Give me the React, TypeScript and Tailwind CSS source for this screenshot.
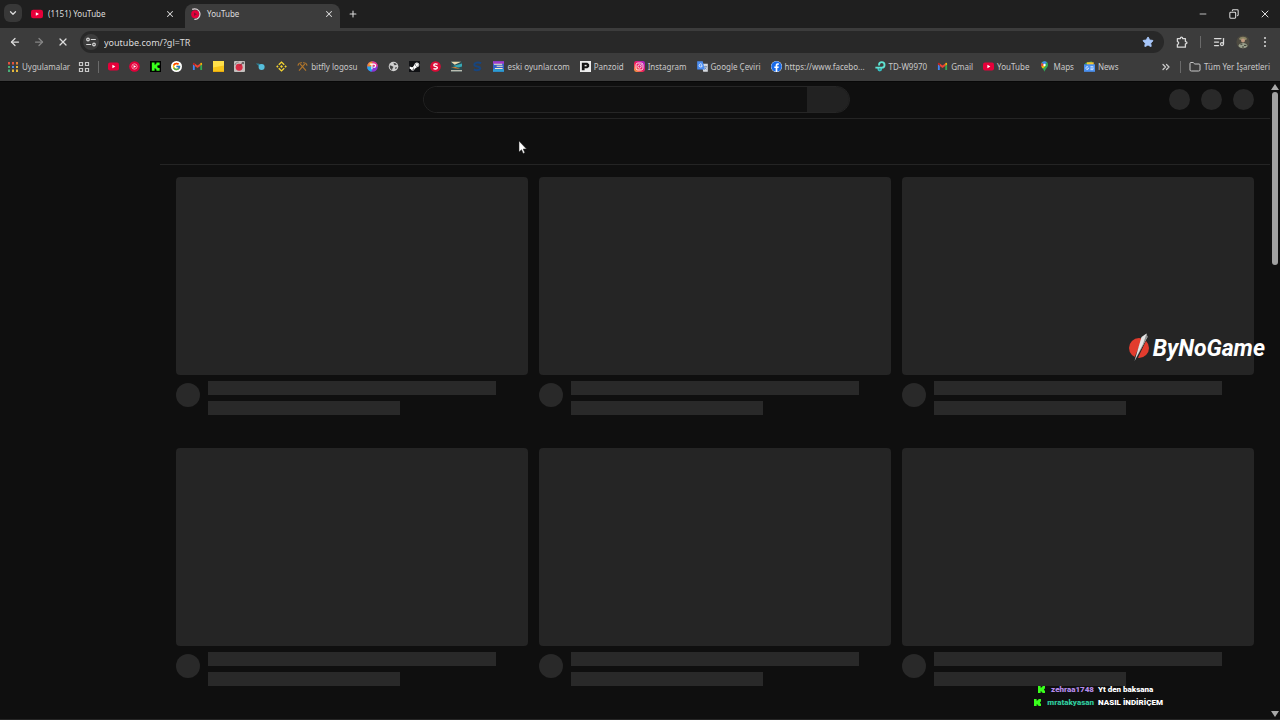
import type { ReactNode } from "react";
import { ArrowLeft, ArrowRight, ChevronDown, ChevronsRight, Copy, Folder, ListMusic, Minus, Plus, Star, X } from "lucide-react";
import { FcGoogle } from "react-icons/fc";
import { FaFacebook, FaSteamSymbol } from "react-icons/fa";

function YouTubeIcon() {
    return (
        <svg viewBox="0 0 12 12" className="size-3">
            <rect x="0" y="1.7" width="12" height="8.6" rx="2.2" fill="#e6003a" />
            <path d="M4.8 4.2v3.6L8 6z" fill="#fff" />
        </svg>
    );
}

function MusicIcon() {
    return (
        <svg viewBox="0 0 12 12" className="size-3">
            <circle cx="6" cy="6" r="5.8" fill="#e2003a" />
            <circle cx="6" cy="6" r="2.9" fill="none" stroke="#ffb9c8" strokeWidth="0.8" />
            <path d="M5 4.3v3.4L7.8 6z" fill="#fff" />
        </svg>
    );
}

function KickIcon() {
    return (
        <svg viewBox="0 0 12 12" className="size-3">
            <path d="M0 0h12v12H0z" fill="#000" />
            <path d="M2 1.500h3v2.500h1V3h1V1.500h3.500v3H9V5H8v2h1v.5h1.500v3H7V9H6V8H5v2.500H2z" fill="#39ff1c" />
        </svg>
    );
}

function GmailIcon() {
    return (
        <svg viewBox="0 0 12 12" className="size-3">
            <path d="M1 3.4v6.4h2V5.2z" fill="#4285f4" />
            <path d="M11 3.4v6.4H9V5.2z" fill="#34a853" />
            <path d="M9 5.2 11 3.8V3c0-1-1-1.2-1.6-.8L9 2.5z" fill="#fbbc04" />
            <path d="M3 2.6v2.8l3 2.3 3-2.3V2.6L6 4.9z" fill="#ea4335" />
            <path d="M3 5.2 1 3.8V3c0-1 1-1.2 1.6-.8l.4.3z" fill="#c5221f" />
        </svg>
    );
}

function YellowIcon() {
    return (
        <svg viewBox="0 0 12 12" className="size-3">
            <path d="M0 0h12v12H0z" fill="#f7c51b" />
            <path d="M0 0h12v5L0 7z" fill="#ffe04a" />
            <path d="M0 11h12v1H0z" fill="#e9a90c" />
        </svg>
    );
}

function RecordIcon() {
    return (
        <svg viewBox="0 0 12 12" className="size-3">
            <rect width="12" height="12" rx="1" fill="#c4c0be" />
            <circle cx="5.6" cy="6.8" r="3.8" fill="#d92b44" />
            <path d="M6.5 5 9.5 2" stroke="#7c2430" strokeWidth="1" />
            <circle cx="9.8" cy="2.2" r="1.4" fill="#6a6464" />
            <path d="M1 4.5C1.4 2.5 3 1.2 5 1.2" stroke="#77706e" strokeWidth="0.9" fill="none" />
        </svg>
    );
}

function CometIcon() {
    return (
        <svg viewBox="0 0 12 12" className="size-3">
            <path d="M1 2.6h3l3 1.4-2.5 2-2-1.8z" fill="#2d7f95" />
            <circle cx="7.2" cy="6.6" r="3.3" fill="#56bfdc" />
        </svg>
    );
}

function BinanceIcon() {
    return (
        <svg viewBox="0 0 12 12" className="size-3" fill="none" stroke="#f3d331" strokeWidth="1.5">
            <path d="M3 4.2 6 1.2l3 3M3 7.8l3 3 3-3" />
            <path d="M6 4.4 7.6 6 6 7.6 4.4 6zM1.5 4.7 2.8 6 1.5 7.3.2 6zM10.5 4.7 11.8 6l-1.3 1.3L9.2 6z" fill="#f3d331" strokeWidth="0" />
        </svg>
    );
}

function PickaxeIcon() {
    return (
        <svg viewBox="0 0 12 12" className="size-3" fill="none" stroke="#b3762a" strokeWidth="1.2">
            <path d="M2.2 10.6 8.6 3.2M9.8 10.6 3.4 3.2" />
            <path d="M6.6 2c1.6-.4 3.8.8 4.4 3M5.4 2C3.8 1.6 1.6 2.8 1 5" />
        </svg>
    );
}

function PaletteIcon() {
    return (
        <svg viewBox="0 0 12 12" className="size-3">
            <circle cx="6" cy="6" r="5.8" fill="#8a35d8" />
            <path d="M6 .2A5.8 5.8 0 0 1 11.8 6H6z" fill="#e8368c" />
            <path d="M6 .2A5.8 5.8 0 0 0 .2 6L6 7z" fill="#f08a2c" />
            <path d="M.2 6A5.8 5.8 0 0 0 5 11.7L6 6z" fill="#25a7ea" />
            <path d="M3 3.4h4.6a1.7 1.7 0 0 1 0 3.6H7M5.4 3.4v5.6" stroke="#fff" strokeWidth="1.2" fill="none" />
        </svg>
    );
}

function GlobeIcon() {
    return (
        <svg viewBox="0 0 12 12" className="size-3">
            <circle cx="6" cy="6" r="5.2" fill="#d0d0d0" />
            <path d="M2 4.6 4.4 5.4 6 6.6 5 8 4.4 9.8C3 9.2 1.9 8 1.9 6zM6 2l2.6.6L9.6 4 7.4 4.6 6.4 3.6zM8.4 6.6l1.4.2-1 2-1.2-.6z" fill="#444" />
        </svg>
    );
}

function SteamIcon() {
    return (
        <span className="flex size-[11px] items-center justify-center bg-[#101114]">
            <FaSteamSymbol className="size-[11px] text-white" />
        </span>
    );
}

function RedSIcon() {
    return (
        <svg viewBox="0 0 12 12" className="size-3">
            <circle cx="6" cy="6" r="5.8" fill="#dc0b37" />
            <path d="M8.2 3.7C7 2.8 4.2 2.8 4.2 4.5c0 1.8 3.8 1.1 3.8 2.9 0 1.7-3 1.7-4.2.7" stroke="#fff" strokeWidth="1.5" fill="none" />
        </svg>
    );
}

function BirdIcon() {
    return (
        <svg viewBox="0 0 12 12" className="size-3">
            <path d="M0 .5h12v11H0z" fill="#2b4a50" />
            <path d="M0 .8h11L4 4z" fill="#e9d9b0" />
            <path d="M2 5.4 12 2.8V6L8 7z" fill="#38a8b4" />
            <path d="M0 7.4 5 6.6l5 2z" fill="#e08232" />
            <path d="M0 10h12v1.3H0z" fill="#d8d4c4" />
        </svg>
    );
}

function BlueSIcon() {
    return (
        <svg viewBox="0 0 12 12" className="size-3">
            <path d="M10 2.4C7 1 2.6 1.6 2.6 4c0 2.6 6.4 1.4 6.4 4 0 2.2-4.4 2.6-7 1.2" stroke="#17457f" strokeWidth="2.2" fill="none" />
        </svg>
    );
}

function EskiIcon() {
    return (
        <svg viewBox="0 0 12 12" className="size-3">
            <path d="M0 .3h12v11.4H0z" fill="#3560c8" />
            <path d="M0 .3h12V3H0z" fill="#a637c9" />
            <path d="M0 9h12v2.7H0z" fill="#2c9fd2" />
            <path d="M1 3.6h9M4 5.8h6.5M2 8.2h8.5" stroke="#f5e8c4" strokeWidth="1.1" />
        </svg>
    );
}

function PanzoidIcon() {
    return (
        <svg viewBox="0 0 12 12" className="size-3">
            <path d="M0 0h12v12H0z" fill="#ededed" />
            <path d="M2 2h6l2 1.6v2.6L8 8H5v2H2z" fill="#161616" />
            <path d="M5 4.2h2.2v1.6H5z" fill="#ededed" />
        </svg>
    );
}

function InstagramIcon() {
    return (
        <svg viewBox="0 0 12 12" className="size-3">
            <defs>
                <linearGradient id="insta" x1="0" y1="1" x2="1" y2="0">
                    <stop offset="0" stopColor="#fdb43c" />
                    <stop offset="0.45" stopColor="#f01c5c" />
                    <stop offset="1" stopColor="#a51fd6" />
                </linearGradient>
            </defs>
            <rect width="12" height="12" rx="2.6" fill="url(#insta)" />
            <rect x="2.2" y="2.2" width="7.6" height="7.6" rx="2" fill="none" stroke="#fff" strokeWidth="0.9" />
            <circle cx="6" cy="6" r="1.8" fill="none" stroke="#fff" strokeWidth="0.9" />
            <circle cx="8.2" cy="3.8" r="0.5" fill="#fff" />
        </svg>
    );
}

function TranslateIcon() {
    return (
        <svg viewBox="0 0 12 12" className="size-3">
            <path d="M5 3h6.8v8.8h-5z" fill="#d6dae0" />
            <path d="M7.4 6H11M9.2 5.2V6M10.4 6c-.4 1.6-1.4 2.6-2.4 3.2M8.2 6.8c.4 1 1.2 1.8 2.4 2.4" stroke="#56749e" strokeWidth="0.6" fill="none" />
            <path d="M.2.4h6l2.4 9H.2z" fill="#4a8cf0" />
            <path d="M5.4 3.9A1.7 1.7 0 1 0 5.7 5.2H4.2" stroke="#fff" strokeWidth="0.8" fill="none" />
        </svg>
    );
}

function TpLinkIcon() {
    return (
        <svg viewBox="0 0 12 12" className="size-3" fill="none" strokeWidth="2">
            <path d="M3.6 6.6v2.2a1.6 1.6 0 0 0 3.2 0V7.4" stroke="#35c1c4" />
            <path d="M4.4 5V4.3a3 3 0 1 1 3 3H.4" stroke="#5fe3d3" />
        </svg>
    );
}

function MapsIcon() {
    return (
        <svg viewBox="0 0 12 12" className="size-3">
            <path d="M6 .4a3.9 3.9 0 0 0-3.9 4C2.1 7 5 8.2 6 11.8 7 8.2 9.9 7 9.9 4.4A3.9 3.9 0 0 0 6 .4z" fill="#34a853" />
            <path d="M6 .4a3.9 3.9 0 0 0-2.9 1.5L6 4.4l2.5-3.1C7.7.7 6.8.4 6 .4z" fill="#4285f4" />
            <path d="M3.1 1.9a4 4 0 0 0-.5 4.4L6 4.4z" fill="#ea4335" />
            <path d="M2.6 6.3c.5.8 1.2 1.3 1.7 2L7 5.4 6 4.4z" fill="#fbbc04" />
            <circle cx="6" cy="4.3" r="1.3" fill="#fff" />
        </svg>
    );
}

function NewsIcon() {
    return (
        <svg viewBox="0 0 12 12" className="size-3">
            <path d="M1 2.4 8.4.4l.6 3H1z" fill="#34a853" />
            <path d="M3 1.4h7.6v3H3z" fill="#f4c430" />
            <path d="M0 3.6h12v8.2H0z" fill="#4a90f0" />
            <path d="M4.6 6.6A1.5 1.5 0 1 0 5 7.9H3.8M7 6.2h3.2M7 7.8h3.8M7 9.4h3.2" stroke="#fff" strokeWidth="0.8" fill="none" />
        </svg>
    );
}

function AppsIcon() {
    return (
        <svg viewBox="0 0 12 12" className="size-3">
            <path d="M1 1h2v2.500H1zM5 1h2v2.500H5z" fill="#e5533f" />
            <path d="M9 1h2v2.500H9z" fill="#e0803a" />
            <path d="M1 5h2v2H1z" fill="#48b078" />
            <path d="M5 5h2v2H5z" fill="#4f8de8" />
            <path d="M9 5h2v2H9z" fill="#e6b93c" />
            <path d="M1 8.500h2V11H1z" fill="#48b078" />
            <path d="M5 8.500h2V11H5zM9 8.500h2V11H9z" fill="#e6b93c" />
        </svg>
    );
}

function TabGroupsIcon() {
    return (
        <svg viewBox="0 0 12 12" className="size-3" fill="none" stroke="#c8c8c8" strokeWidth="1.2">
            <path d="M1.500 1.500h3v3h-3zM7.500 1.500h3v3h-3zM1.500 7.500h3v3h-3zM7.500 7.500h3v3h-3z" />
        </svg>
    );
}

function LoadingIcon() {
    return (
        <svg viewBox="0 0 12 12" className="size-3">
            <circle cx="5.2" cy="6.2" r="4" fill="#e2003a" />
            <path d="M4 4.4v3.6L7 6.200z" fill="#7d1230" />
            <path d="M2.2 1.4A5.300 5.300 0 1 1 4.4 11.4" fill="none" stroke="#e4d8dc" strokeWidth="1.2" />
        </svg>
    );
}

function SiteInfoIcon() {
    return (
        <svg viewBox="0 0 12 12" className="size-3" fill="none" stroke="#d8d8d8" strokeWidth="1.2">
            <circle cx="3" cy="3.5" r="1.3" />
            <path d="M5.800 3.500h5M1.200 8.500h5" />
            <circle cx="9" cy="8.500" r="1.3" />
        </svg>
    );
}

function ExtensionIcon() {
    return (
        <svg viewBox="0 0 12 12" className="size-3" fill="none" stroke="#d8d8d8" strokeWidth="1.3" strokeLinejoin="round">
            <path d="M1.4 2.6h3C4.200.6 6.800.6 6.600 2.600h2.800v3c2-.2 2 2.400 0 2.200v3.400h-8V8.400c1.600 0 1.800-2.800 0-2.800z" />
        </svg>
    );
}

function ProfileIcon() {
    return (
        <svg viewBox="0 0 14 14" className="size-3.5">
            <circle cx="7" cy="7" r="6.6" fill="#4d4a40" />
            <path d="M3 4c1-3 7-3 8 0l-1 1H4z" fill="#8b8564" />
            <circle cx="7" cy="5.6" r="2" fill="#c09a80" />
            <path d="M2.4 11c.6-4 8.6-4 9.2 0-2 3-7.2 3-9.2 0z" fill="#9aa08c" />
            <path d="M4.4 9.2h2M8 10.4h2.4M6 12h2" stroke="#3a3a30" strokeWidth="1" />
        </svg>
    );
}

type Bookmark = { name: string; icon: ReactNode; label?: string };

const bookmarks: Bookmark[] = [
    { name: "YouTube", icon: <YouTubeIcon /> },
    { name: "YouTube Music", icon: <MusicIcon /> },
    { name: "Kick", icon: <KickIcon /> },
    { name: "Google", icon: <FcGoogle className="size-3 rounded-full bg-white p-px" /> },
    { name: "Gmail", icon: <GmailIcon /> },
    { name: "Notlar", icon: <YellowIcon /> },
    { name: "Kayıt", icon: <RecordIcon /> },
    { name: "Comet", icon: <CometIcon /> },
    { name: "Binance", icon: <BinanceIcon /> },
    { name: "bitfly", icon: <PickaxeIcon />, label: "bitfly logosu" },
    { name: "Palet", icon: <PaletteIcon /> },
    { name: "Web", icon: <GlobeIcon /> },
    { name: "Steam", icon: <SteamIcon /> },
    { name: "S", icon: <RedSIcon /> },
    { name: "Oyun", icon: <BirdIcon /> },
    { name: "S mavi", icon: <BlueSIcon /> },
    { name: "eski oyunlar", icon: <EskiIcon />, label: "eski oyunlar.com" },
    { name: "Panzoid", icon: <PanzoidIcon />, label: "Panzoid" },
    { name: "Instagram", icon: <InstagramIcon />, label: "Instagram" },
    { name: "Çeviri", icon: <TranslateIcon />, label: "Google Çeviri" },
    { name: "Facebook", icon: <FaFacebook className="size-3 rounded-full bg-white text-[#1769e8]" />, label: "https://www.facebo..." },
    { name: "TP-Link", icon: <TpLinkIcon />, label: "TD-W9970" },
    { name: "Gmail", icon: <GmailIcon />, label: "Gmail" },
    { name: "YouTube", icon: <YouTubeIcon />, label: "YouTube" },
    { name: "Maps", icon: <MapsIcon />, label: "Maps" },
    { name: "News", icon: <NewsIcon />, label: "News" },
];

function TabStrip() {
    return (
        <div className="flex h-7 items-end bg-[#1f1f1f] text-[8px] text-[#dcdcdc]">
            <button aria-label="Sekmelerde ara" className="mb-1.5 ml-1 flex size-[18px] items-center justify-center rounded-md bg-[#383838]">
                <ChevronDown className="size-2.5" strokeWidth={3} />
            </button>
            <div className="ml-[5px] flex h-6 w-[158px] items-center pr-2.5 pb-1 pl-1">
                <YouTubeIcon />
                <span className="ml-[5px] flex-1">(1151) YouTube</span>
                <button aria-label="Sekmeyi kapat"><X className="size-2.5" strokeWidth={2.5} /></button>
            </div>
            <div className="flex h-6 w-[155px] items-center rounded-t-lg bg-[#3c3c3c] pr-1.5 pb-1 pl-[5px]">
                <LoadingIcon />
                <span className="ml-[5px] flex-1">YouTube</span>
                <button aria-label="Sekmeyi kapat"><X className="size-2.5" strokeWidth={2.5} /></button>
            </div>
            <button aria-label="Yeni sekme" className="flex h-6 w-[26px] items-center justify-center pb-1">
                <Plus className="size-2.5" strokeWidth={2.5} />
            </button>
            <div className="ml-auto flex h-6 items-center pb-1">
                <button aria-label="Simge durumuna küçült" className="flex w-[31px] justify-center"><Minus className="size-2.5" /></button>
                <button aria-label="Geri yükle" className="flex w-[31px] justify-center"><Copy className="size-2.5 -scale-x-100" strokeWidth={2.5} /></button>
                <button aria-label="Kapat" className="flex w-[31px] justify-center"><X className="size-3" /></button>
            </div>
        </div>
    );
}

function Toolbar() {
    return (
        <div className="flex h-7 items-center bg-[#3c3c3c] pr-[5px] pl-[3px] text-[#dcdcdc]">
            <button aria-label="Geri" className="flex w-6 justify-center"><ArrowLeft className="size-3" strokeWidth={2.5} /></button>
            <button aria-label="İleri" className="flex w-6 justify-center text-[#858585]"><ArrowRight className="size-3" strokeWidth={2.5} /></button>
            <button aria-label="Durdur" className="flex w-6 justify-center"><X className="size-3" strokeWidth={2.5} /></button>
            <div className="ml-[5px] flex h-[22px] flex-1 items-center rounded-full bg-[#282828] pr-2.5 pl-[3px]">
                <button aria-label="Site bilgileri" className="flex size-4 items-center justify-center rounded-full bg-[#3c3c3c]"><SiteInfoIcon /></button>
                <input aria-label="Adres çubuğu" className="ml-[5px] h-4 flex-1 bg-transparent text-[9px] outline-none" defaultValue="youtube.com/?gl=TR" />
                <button aria-label="Yer işareti"><Star className="size-3 fill-[#a8c7fa] text-[#a8c7fa]" /></button>
            </div>
            <button aria-label="Uzantılar" className="ml-1.5 flex w-6 justify-center"><ExtensionIcon /></button>
            <div className="mx-1.5 h-3 w-px bg-[#6a6a6a]" />
            <button aria-label="Medya" className="flex w-6 justify-center"><ListMusic className="size-3" strokeWidth={2.5} /></button>
            <button aria-label="Profil" className="flex w-6 justify-center"><ProfileIcon /></button>
            <button aria-label="Menü" className="flex w-5 justify-center">
                <svg viewBox="0 0 12 12" className="size-3" fill="currentColor">
                    <circle cx="6" cy="2" r="1" />
                    <circle cx="6" cy="6" r="1" />
                    <circle cx="6" cy="10" r="1" />
                </svg>
            </button>
        </div>
    );
}

function BookmarksBar() {
    return (
        <div className="flex h-[25px] items-center overflow-hidden bg-[#3c3c3c] pr-2.5 pb-1 pl-[7px] text-[8px] whitespace-nowrap text-[#c9c9c9]">
            <a href="#" className="flex items-center gap-[3px]"><AppsIcon />Uygulamalar</a>
            <button aria-label="Sekme grupları" className="ml-2"><TabGroupsIcon /></button>
            <div className="mr-1 ml-2 h-3 w-px bg-[#6a6a6a]" />
            {bookmarks.map((b, i) => (
                <a key={i} href="#" aria-label={b.name} className="mx-[5px] flex shrink-0 items-center gap-[3px] [&>svg]:size-[11px]">
                    {b.icon}
                    {b.label}
                </a>
            ))}
            <button aria-label="Diğer yer işaretleri" className="ml-auto"><ChevronsRight className="size-3" strokeWidth={2.5} /></button>
            <div className="mx-2 h-3 w-px bg-[#6a6a6a]" />
            <a href="#" className="flex items-center gap-[3px]"><Folder className="size-3" />Tüm Yer İşaretleri</a>
        </div>
    );
}

function VideoSkeleton() {
    return (
        <div>
            <div className="aspect-video rounded-[4px] bg-[#252525]" />
            <div className="mt-1.5 flex h-[67px] gap-2">
                <div className="mt-0.5 size-6 rounded-full bg-[#292929]" />
                <div className="flex-1">
                    <div className="h-3.5 w-9/10 bg-[#292929]" />
                    <div className="mt-1.5 h-3.5 w-3/5 bg-[#292929]" />
                </div>
            </div>
        </div>
    );
}

function ChatLine({ user, color, text }: { user: string; color: string; text: string }) {
    return (
        <div className="flex h-[13px] items-center gap-1">
            <div className="flex flex-1 items-center justify-end gap-1.5">
                <svg viewBox="0 0 8 8" className="size-[7px]">
                    <path d="M0 0h3v2h1V1h1V0h3v3H7v2h1v3H5V7H4V6H3v2H0z" fill="#39ff1c" />
                </svg>
                <span className={color}>{user}</span>
            </div>
            <span className="w-[68px] text-white">{text}</span>
        </div>
    );
}

export default function App() {
    return (
        <div className="relative flex h-screen flex-col overflow-hidden border-b border-[#262626] bg-[#0f0f0f] font-['Noto_Sans','Open_Sans',sans-serif]">
            <TabStrip />
            <Toolbar />
            <BookmarksBar />

            <div className="flex min-h-0 flex-1 border-t border-[#080808]">
                <div className="flex min-w-0 flex-1 flex-col">
                    <header className="mb-px flex h-[35px] items-center justify-between pr-[15px]">
                        <div className="w-[104px]" />
                        <form className="flex h-[27px] w-[427px] overflow-hidden rounded-full border border-[#262626]">
                            <input aria-label="Ara" className="min-w-0 flex-1 bg-[#111111] outline-none" />
                            <button type="button" aria-label="Ara" className="w-[42px] bg-[#222222]" />
                        </form>
                        <div className="flex w-[86px] gap-[11px]">
                            <div className="size-[21px] rounded-full bg-[#292929]" />
                            <div className="size-[21px] rounded-full bg-[#292929]" />
                            <div className="size-[21px] rounded-full bg-[#292929]" />
                        </div>
                    </header>
                    <main className="ml-40 min-h-0 flex-1">
                        <div className="h-[47px] border-y border-[#242424]" />
                        <div className="grid grid-cols-3 gap-x-[11px] px-4 pt-3">
                            {[0, 1, 2, 3, 4, 5].map((n) => <VideoSkeleton key={n} />)}
                        </div>
                    </main>
                </div>
                <div className="flex w-2.5 flex-col items-center justify-between pt-0.5 pb-0.5">
                    <svg viewBox="0 0 8 6" className="h-1.5 w-2" fill="#a8a8a8"><path d="M4 0 8 6H0z" /></svg>
                    <div className="mt-0.5 h-[173px] w-1.5 rounded-full bg-[#a0a0a0]" />
                    <div className="flex-1" />
                    <svg viewBox="0 0 8 6" className="h-1.5 w-2" fill="#a8a8a8"><path d="M4 6 8 0H0z" /></svg>
                </div>
            </div>

            {/* stream overlays */}
            <svg viewBox="0 0 12 18" className="absolute top-[140px] left-[518px] h-[18px] w-3">
                <path d="M1 1v11l2.5-2.3 1.7 3.800 1.600-.8L5.200 9h3.300z" fill="#fff" stroke="#222" strokeWidth="0.5" />
            </svg>
            <div className="absolute top-[331px] right-[15px] flex items-center">
                <svg viewBox="0 0 24 32" className="h-8 w-6">
                    <circle cx="10" cy="16" r="10" fill="#e23c2e" />
                    <path d="M16 1 19.500 3.500 7 30 4 29z" fill="#262626" />
                    <path d="M12.500 5 17.500 1.500 18.500 5 5.500 29z" fill="#e4e4e4" />
                    <path d="M17.500 1.500 18.500 5 5.500 29 14 12z" fill="#8f8f8f" />
                </svg>
                <span className="pt-0.5 font-[Roboto,sans-serif] text-[23px] leading-8 font-bold text-white italic">ByNoGame</span>
            </div>
            <div className="absolute right-[114px] bottom-[10px] flex flex-col font-[Roboto,sans-serif] text-[8px] font-black">
                <ChatLine user="zehraa1748" color="text-[#b48ae8]" text="Yt den baksana" />
                <ChatLine user="mratakyasan" color="text-[#2fc79b]" text="NASIL İNDİRİÇEM" />
            </div>
        </div>
    );
}
